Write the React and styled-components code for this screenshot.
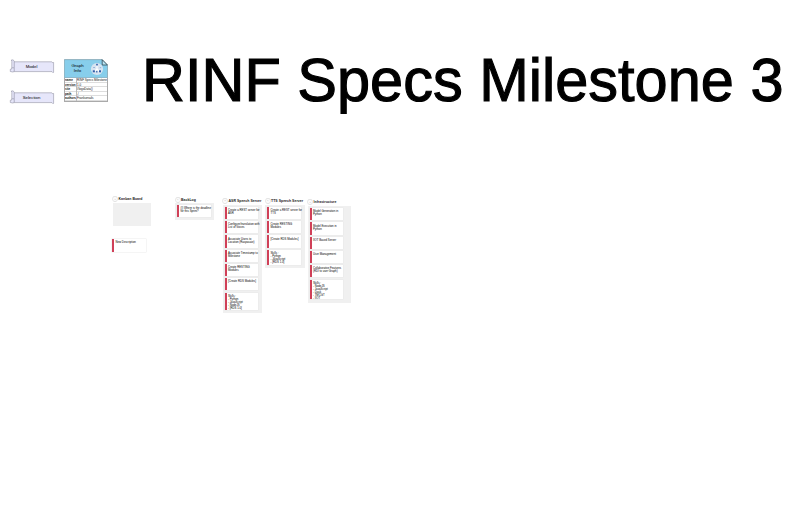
import React from "react";
import styled, { createGlobalStyle } from "styled-components";

const Global = createGlobalStyle`
  * { box-sizing: border-box; }
  body { margin: 0; background: #fff; color: #000; font-family: "Liberation Sans", Arial, sans-serif; }
`;

const Page = styled.main`
  width: 800px;
  height: 532px;
  overflow: hidden;
`;

const Header = styled.header`
  display: flex;
  height: 195px;
  padding-left: 9px;
`;

const ScrollStack = styled.nav`
  display: flex;
  flex-direction: column;
  gap: 15px;
  width: 46px;
  padding-top: 58.5px;
`;

const ScrollItem = styled.div`
  display: grid;
  height: 16px;
  font-size: 4.3px;
  & > * { grid-area: 1 / 1; }
`;

const ScrollLabel = styled.span`
  place-self: center;
  padding-right: 1px;
`;

const GraphCard = styled.section`
  width: 44px;
  margin: 59px 0 0 9px;
  height: 43px;
`;

const GraphTop = styled.div`
  display: grid;
  height: 19px;
  & > * { grid-area: 1 / 1; }
`;

const GraphName = styled.div`
  width: 27px;
  padding-top: 5.4px;
  font-size: 4.4px;
  line-height: 4.3px;
  text-align: center;
`;

const Info = styled.dl`
  margin: 0;
  height: 24px;
  border: 1px solid #aaa;
  border-top: 0;
  font-size: 3px;
  color: #111;
`;

const InfoRow = styled.div`
  display: grid;
  grid-template-columns: 10.5px 1fr;
  height: 4.6px;
  line-height: 4.5px;
  white-space: nowrap;
  overflow: hidden;
  box-shadow: inset 0 -0.6px #bbb;
`;

const Key = styled.dt`
  font-weight: bold;
  overflow: hidden;
`;

const Value = styled.dd`
  margin: 0;
  padding-left: 0.5px;
  border-left: 1px solid #bbb;
  overflow: hidden;
`;

const Title = styled.h1`
  margin: 46px 0 0 34px;
  height: 68px;
  font-size: 59.5px;
  font-weight: 400;
  line-height: 68px;
  white-space: nowrap;
  transform: scaleY(1.03);
  -webkit-text-stroke: 1.1px #000;
`;

const Board = styled.section`
  display: flex;
  align-items: flex-start;
  padding-left: 112.5px;
`;

const Lane = styled.section`
  width: ${(p) => p.$width}px;
  margin-right: ${(p) => p.$after}px;
  padding-top: ${(p) => p.$top}px;
`;

const LaneTitle = styled.h2`
  display: flex;
  align-items: center;
  gap: 1.5px;
  height: 6px;
  margin: 0 0 ${(p) => p.$gap}px;
  padding-left: 0.6px;
  font-size: 3.5px;
  line-height: 6px;
  font-weight: 700;
  color: #222;
  white-space: nowrap;
`;

const Toggle = styled.span`
  display: grid;
  place-items: center;
  width: 4px;
  height: 4px;
  border-radius: 1px;
  background: #fafafa;
  box-shadow: 0 0 0 0.4px #ccc;
  font-size: 2.5px;
  font-weight: 400;
  line-height: 3px;
`;

const Stack = styled.div`
  display: flex;
  flex-direction: column;
  gap: 2.1px;
  height: ${(p) => p.$height}px;
  padding: 2.1px 0 0 2px;
  background: #f0f0f0;
`;

const Card = styled.article`
  width: 33.5px;
  height: ${(p) => p.$height}px;
  flex: none;
  padding: 2.2px 0 0 1.5px;
  background: #fff;
  box-shadow: 0 0 0 0.4px #e6e6e6;
  border-left: 2px solid #d04058;
  font-size: 2.8px;
  line-height: 3px;
  white-space: pre;
  color: #000;
`;

const LooseCard = styled(Card)`
  margin-top: 13px;
  margin-left: -0.5px;
`;

function Scroll({ label }) {
  return (
    <ScrollItem>
      <svg width="46" height="16" viewBox="0 0 46 16" fill="#e6e6fa" stroke="#8c8c9d" strokeWidth=".55">
        <path d="M4.7 2.8H42.8Q44.2 5 44.6 3.4V13.2Q44.4 14.8 43 12.6H4.7Z" />
        <path d="M2 1.2Q4.8-.1 5.2 2.4V12.3Q4.8 13.7 1.3 12.5V10.2Q2.7 11 2.8 8.7V2.5Q2.6 1.2 2 1.2ZM2.7 8.8H5" />
      </svg>
      <ScrollLabel>{label}</ScrollLabel>
    </ScrollItem>
  );
}

const details = [
  ["name", "RINF Specs Milestone"],
  ["version", "1.0"],
  ["site", "//logoData()"],
  ["path", "./"],
  ["authors", "Frankurnails"],
];

function GraphInfo() {
  return (
    <GraphCard>
      <GraphTop>
        <svg width="44" height="19" viewBox="0 0 44 19">
          <path d="M.3.6H38.2L43.5 6V18.8H.3Z" fill="#87ceeb" stroke="#718e9b" strokeWidth=".6" />
          <path d="M38.2.7V6H43.4Z" fill="#b9e5f4" stroke="#24343c" strokeWidth=".7" />
          <circle cx="33" cy="10" r="6.1" fill="#d7e4f1" />
          <path d="M33 6V10L29.5 13M33 10L36 13" fill="none" stroke="#fff" strokeWidth="1.1" />
          <g fill="#315ca8">
            <rect x="32.2" y="4.8" width="1.6" height="1.7" />
            <rect x="28.8" y="11.3" width="2.1" height="2" />
            <rect x="32.2" y="12" width="1.2" height="1.5" />
            <rect x="35" y="11.3" width="2" height="2" />
          </g>
          <path d="M29.3 8.5h1.5M35.7 8.7h1.5" stroke="#8ba9d4" />
        </svg>
        <GraphName>Graph<br />Info</GraphName>
      </GraphTop>
      <Info>
        {details.map(([key, value]) => (
          <InfoRow key={key}><Key>{key}</Key><Value>{value}</Value></InfoRow>
        ))}
      </Info>
    </GraphCard>
  );
}

const lanes = [
  {
    title: "BackLog", width: 38.5, after: 9, top: 1.7, gap: 0.4, height: 17,
    cards: [["(I) Where is the deadline\nfor this Sprint?", 12.2]],
  },
  {
    title: "ASR Speech Server", width: 39.5, after: 3, top: 2.8, gap: 1, height: 108.5,
    cards: [
      ["Create a REST server for\nASR", 12.2],
      ["Configure/translation with\nList of Voices", 12.2],
      ["Associate Users to\nLocation (Raspasaie)", 12.2],
      ["Associate Timestamp to\nMilestone", 12.2],
      ["Create RESTING\nModules", 12.2],
      ["[Create RDS Modules]", 12.2],
      ["Skills :\n- Python\n- JavaScript\n- NodeJS\n- [RDS 1.0]", 17.5],
    ],
  },
  {
    title: "TTS Speech Server", width: 39.5, after: 3, top: 2.8, gap: 1, height: 63,
    cards: [
      ["Create a REST server for\nTTS", 12.2],
      ["Create RESTING\nModules", 12.2],
      ["[Create RDS Modules]", 12.2],
      ["Skills :\n- Python\n- JavaScript\n- [RDS 1.0]", 15],
    ],
  },
  {
    title: "Infrastructure", width: 43, after: 0, top: 4, gap: 1, height: 97,
    cards: [
      ["Model Generation in\nPython", 12.2],
      ["Model Execution in\nPython", 12.2],
      ["IIOT Based Server", 12.2],
      ["User Management", 12.2],
      ["Collaborative Features\n(RDI to user Graph)", 12.2],
      ["Skills :\n- NodeJS\n- JavaScript\n- Dask\n- TMCGT\n- IIOT", 19.8],
    ],
  },
];

function Heading({ children, gap }) {
  return <LaneTitle $gap={gap}><Toggle>–</Toggle>{children}</LaneTitle>;
}

export default function App() {
  return (
    <>
      <Global />
      <Page>
        <Header>
          <ScrollStack><Scroll label="Model" /><Scroll label="Selection" /></ScrollStack>
          <GraphInfo />
          <Title>RINF Specs Milestone 3</Title>
        </Header>
        <Board>
          <Lane $width={38.5} $after={24} $top={1}>
            <Heading gap={1}>Kanban Board</Heading>
            <Stack $height={23} />
            <LooseCard $height={12.5}>New Description</LooseCard>
          </Lane>
          {lanes.map((lane) => (
            <Lane key={lane.title} $width={lane.width} $after={lane.after} $top={lane.top}>
              <Heading gap={lane.gap}>{lane.title}</Heading>
              <Stack $height={lane.height}>
                {lane.cards.map(([text, height]) => <Card key={text} $height={height}>{text}</Card>)}
              </Stack>
            </Lane>
          ))}
        </Board>
      </Page>
    </>
  );
}
